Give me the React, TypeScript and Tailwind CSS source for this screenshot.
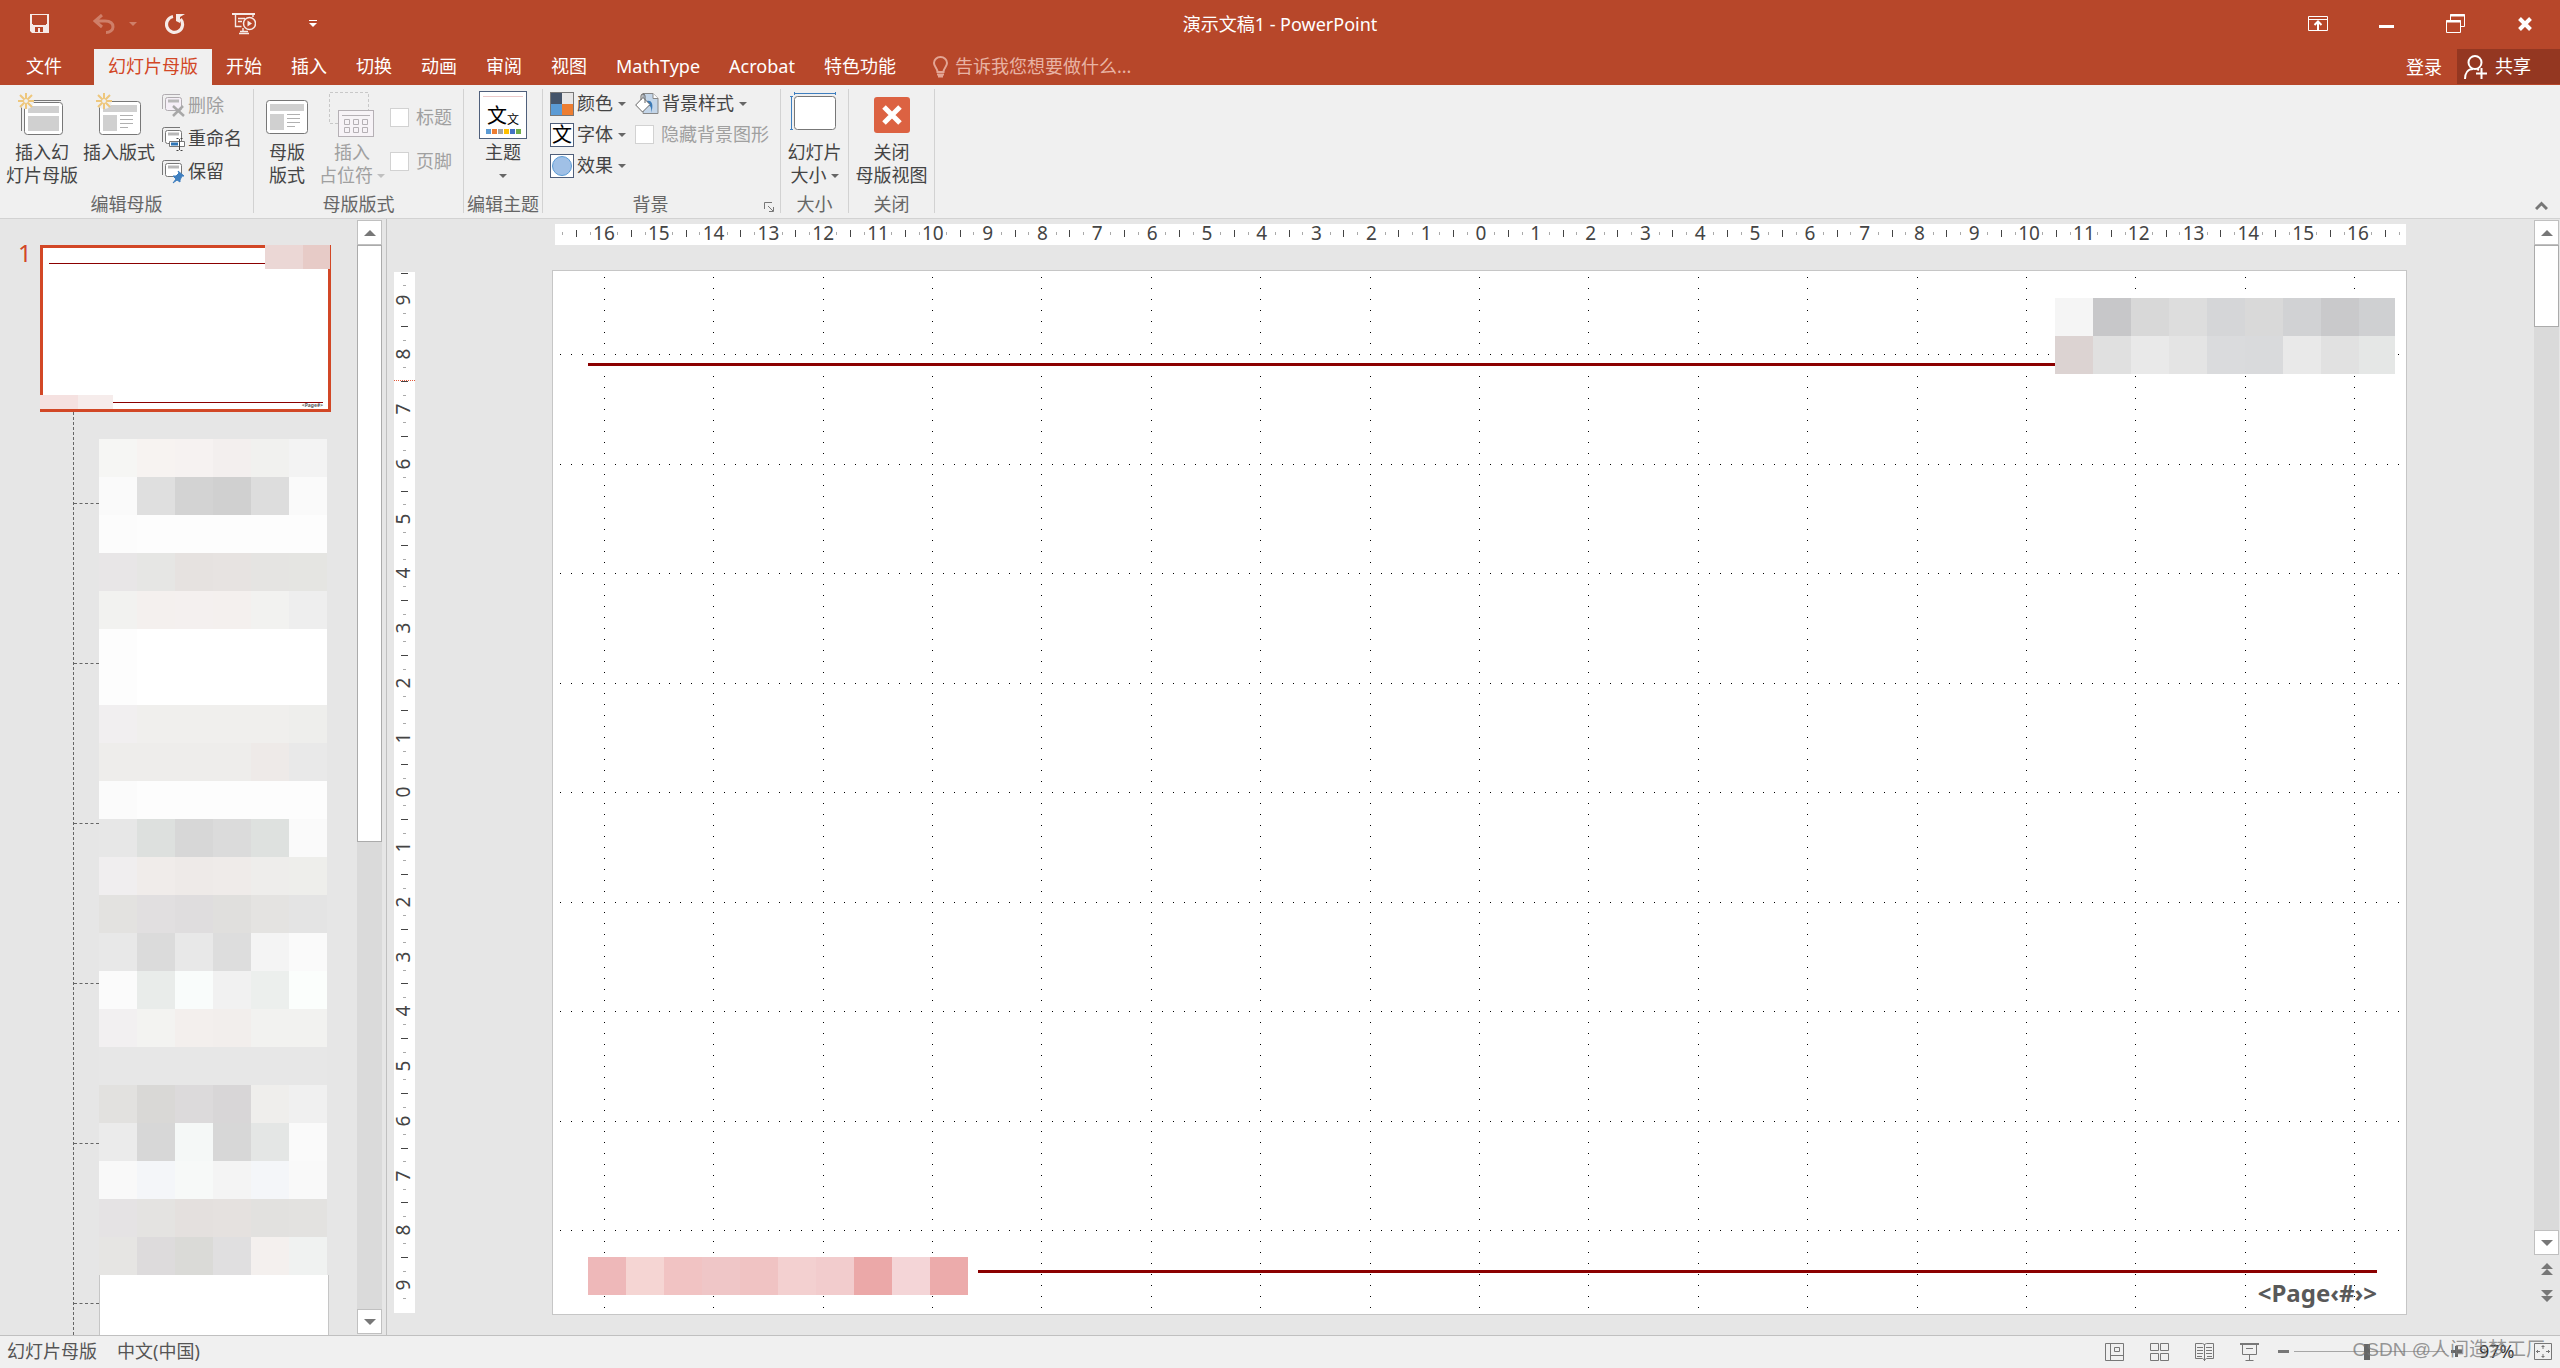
import type { ReactNode } from "react";
import clsx from "clsx";

const TABS = ["开始", "插入", "切换", "动画", "审阅", "视图", "MathType", "Acrobat", "特色功能"];

/* Pixelated previews of the layouts in the left pane, six cells per row */
const LAYOUT_CELLS = [
  "bg-[#f6f6f4]", "bg-[#f7f3f1]", "bg-[#f6f2f1]", "bg-[#f3efee]", "bg-[#f1f1ef]", "bg-[#f3f3f3]",
  "bg-[#fafafa]", "bg-[#dfdfdf]", "bg-[#d3d3d3]", "bg-[#d0d0d0]", "bg-[#dddddd]", "bg-[#fafafa]",
  "bg-[#fcfcfc]", "bg-[#fdfdfd]", "bg-[#fdfdfd]", "bg-[#fdfdfd]", "bg-[#fdfdfd]", "bg-[#fdfdfd]",
  "bg-[#e8e6e7]", "bg-[#e6e6e4]", "bg-[#e6e2e0]", "bg-[#e7e3e1]", "bg-[#e5e4e2]", "bg-[#e5e5e2]",
  "bg-[#f2f2f0]", "bg-[#f4f0ee]", "bg-[#f4f0ef]", "bg-[#f4f0ee]", "bg-[#f2f2f0]", "bg-[#eeeeee]",
  "bg-[#fdfdfd]", "bg-white", "bg-white", "bg-white", "bg-white", "bg-white",
  "bg-[#fdfdfd]", "bg-white", "bg-white", "bg-white", "bg-white", "bg-white",
  "bg-[#f1eff0]", "bg-[#f0efed]", "bg-[#f0efed]", "bg-[#f0efed]", "bg-[#f0efed]", "bg-[#eeeeec]",
  "bg-[#eeedeb]", "bg-[#eeedeb]", "bg-[#eeedeb]", "bg-[#eeedeb]", "bg-[#eeeae8]", "bg-[#e9e9e9]",
  "bg-[#fbfbfb]", "bg-[#fdfdfd]", "bg-[#fdfdfd]", "bg-[#fdfdfd]", "bg-[#fdfdfd]", "bg-[#fdfdfd]",
  "bg-[#e7e7e7]", "bg-[#dde0de]", "bg-[#d7d7d7]", "bg-[#dbdbdb]", "bg-[#dee1df]", "bg-[#fafafa]",
  "bg-[#f0eeef]", "bg-[#f0ecea]", "bg-[#eeeae8]", "bg-[#efebe9]", "bg-[#eeedeb]", "bg-[#eeeeeb]",
  "bg-[#e3e2e0]", "bg-[#e1dfe0]", "bg-[#dfddde]", "bg-[#e0dfdd]", "bg-[#e4e3e1]", "bg-[#e4e4e4]",
  "bg-[#e8e8e8]", "bg-[#dbdbdb]", "bg-[#e8e8e8]", "bg-[#dddddd]", "bg-[#f4f4f4]", "bg-[#fafafa]",
  "bg-[#fbfbfb]", "bg-[#e9ecea]", "bg-[#f9fcfb]", "bg-[#f1f1f1]", "bg-[#ecefed]", "bg-[#fbfefc]",
  "bg-[#f2f0f1]", "bg-[#f3f3f1]", "bg-[#f3efed]", "bg-[#f2eeec]", "bg-[#f2f2f0]", "bg-[#f2f2f0]",
  "bg-[#e7e7e7]", "bg-[#e7e7e7]", "bg-[#e7e7e7]", "bg-[#e7e7e7]", "bg-[#e7e7e7]", "bg-[#e7e7e7]",
  "bg-[#e2e1df]", "bg-[#d9d8d6]", "bg-[#dcdadb]", "bg-[#d8d6d7]", "bg-[#efeeec]", "bg-[#f0f0f0]",
  "bg-[#ebebeb]", "bg-[#d7d7d7]", "bg-[#f5f8f7]", "bg-[#d7d7d7]", "bg-[#e4e6e5]", "bg-[#fafafa]",
  "bg-[#f9f9f9]", "bg-[#f4f6f9]", "bg-[#f7f9f8]", "bg-[#f4f4f4]", "bg-[#f4f6f9]", "bg-[#f9f9f9]",
  "bg-[#e5e3e4]", "bg-[#e4e3e1]", "bg-[#e4e0de]", "bg-[#e5e1df]", "bg-[#e2e1df]", "bg-[#e3e2e0]",
  "bg-[#e6e5e3]", "bg-[#dddbdc]", "bg-[#dadad7]", "bg-[#e0dfe0]", "bg-[#f4f0ee]", "bg-[#f0f2f1]",
];

const LOGO_CELLS = [
  "bg-[#f5f5f5]", "bg-[#c7c7c9]", "bg-[#d8d8d8]", "bg-[#dddddd]", "bg-[#d5d6d8]", "bg-[#d9d9d9]", "bg-[#d1d2d4]", "bg-[#c9c9cb]", "bg-[#cfd0d2]",
  "bg-[#dcd3d2]", "bg-[#e0e0e0]", "bg-[#e9e9e9]", "bg-[#e4e4e4]", "bg-[#dadbdd]", "bg-[#d9dadc]", "bg-[#e9e9e9]", "bg-[#e1e1e1]", "bg-[#e5e7e6]",
];

const FOOTER_CELLS = [
  "bg-[#eeb8b9]", "bg-[#f5d5d3]", "bg-[#f1c3c3]", "bg-[#efc6c7]", "bg-[#f0c3c3]",
  "bg-[#f3d0d0]", "bg-[#f2cccd]", "bg-[#eba8a8]", "bg-[#f4d5d7]", "bg-[#ecabab]",
];

function range(from: number, to: number) {
  return Array.from({ length: to - from + 1 }, (_, i) => from + i);
}

function Caret({ className = "text-[#666]" }: { className?: string }) {
  return (
    <svg width="8" height="4" viewBox="0 0 8 4" className={clsx("shrink-0", className)}>
      <path d="M0 0h8L4 4z" fill="currentColor" />
    </svg>
  );
}

/* ---------- title bar ---------- */

function TitleBar() {
  return (
    <div className="grid grid-cols-[1fr_auto_1fr] items-center h-[49px] text-white">
      <div className="flex items-center pl-[30px] pb-[2px]">
        <button aria-label="保存">
          <svg width="19" height="19" viewBox="0 0 19 19" className="block">
            <path fillRule="evenodd" fill="#f6ebe8" d="M0 0h19v19h-2H2L0 17zM2 1v9h1v1h13v-1h1V1zM5 13v5h3v-4h2v4h3v-5z" />
          </svg>
        </button>
        <button aria-label="撤消" className="ml-11">
          <svg width="22" height="20" viewBox="0 0 22 20" className="block" fill="none" stroke="#cf7f69" strokeWidth="3">
            <path d="M9 1L2 7l7 6M3 7h9c5 0 8 2 8 6 0 3-3 5.500-7 5.500" />
          </svg>
        </button>
        <button aria-label="撤消选项" className="ml-[14px]">
          <Caret className="text-[#cf7f69]" />
        </button>
        <button aria-label="重复" className="ml-7">
          <svg width="20" height="20" viewBox="0 0 20 20" className="block">
            <path d="M8 2.500A8 8 0 1 0 15.500 5" fill="none" stroke="#f6ebe8" strokeWidth="3.200" />
            <path d="M11 0h9l-5 3 0 6-4-2z" fill="#f6ebe8" />
          </svg>
        </button>
        <button aria-label="从头开始放映" className="ml-[47px]">
          <svg width="24" height="22" viewBox="0 0 24 22" className="block" fill="none" stroke="#f6ebe8">
            <path d="M0 1h23" strokeWidth="2" />
            <path d="M3.500 2v11.500h6M6 5.500h7M6 8.500h4M21 2v2M11 15v3M7 20.500h10M8 18.500h8" strokeWidth="1.400" />
            <circle cx="17.500" cy="10.500" r="6" strokeWidth="1.500" />
            <path d="M15.500 7.500v6l4.500-3z" fill="#f6ebe8" stroke="none" />
          </svg>
        </button>
        <button aria-label="自定义快速访问工具栏" className="ml-[53px]">
          <svg width="8" height="8" viewBox="0 0 8 8" className="block" fill="#fff">
            <path d="M0 0h8v1H0zM0 3h8L4 7z" />
          </svg>
        </button>
      </div>
      <h1 className="pb-[2px] text-[18px] leading-6">演示文稿1 - PowerPoint</h1>
      <div className="flex items-center justify-end pr-7 pb-[2px]">
        <button aria-label="功能区显示选项">
          <svg width="20" height="15" viewBox="0 0 20 15" className="block" fill="none" stroke="#fff">
            <path d="M.5.5h19v14H.5zM1 3.500h18" />
            <path d="M10 14V6M6.500 9L10 5.500 13.500 9" strokeWidth="2" />
          </svg>
        </button>
        <button aria-label="最小化" className="ml-[51px]">
          <svg width="15" height="19" viewBox="0 0 15 19" className="block">
            <path d="M0 11h15v3H0z" fill="#fff" />
          </svg>
        </button>
        <button aria-label="向下还原" className="ml-[52px]">
          <svg width="19" height="19" viewBox="0 0 19 19" className="block" fill="none" stroke="#fff">
            <path d="M4.500 6V.5h14v12H15M.5 6.500h14v12H.5z" />
            <path d="M4 1.500h15M0 7.500h15" strokeWidth="2" />
          </svg>
        </button>
        <button aria-label="关闭" className="ml-[53px]">
          <svg width="14" height="14" viewBox="0 0 14 14" className="block">
            <path d="M1.500 1.500l11 11M12.500 1.500l-11 11" stroke="#fff" strokeWidth="4" />
          </svg>
        </button>
      </div>
    </div>
  );
}

function TabBar() {
  return (
    <div className="flex items-stretch h-9 text-[18px] text-white">
      <button className="px-[26px] pb-[2px]">文件</button>
      <button className="ml-[6px] px-[14px] pb-[2px] bg-[#f0f0f0] text-[#d24726]">幻灯片母版</button>
      <nav className="flex ml-[14px] pb-[2px] gap-[29px]">
        {TABS.map((tab) => (
          <button key={tab}>{tab}</button>
        ))}
      </nav>
      <label className="flex flex-1 items-center ml-[37px] pb-px">
        <svg width="15" height="22" viewBox="0 0 15 22" fill="none" stroke="#e3a594" strokeWidth="2">
          <path d="M4.500 16c0-4-3.500-5-3.500-9a6.500 6 0 0 1 13 0c0 4-3.500 5-3.500 9z" />
          <path d="M4 18.500h7M5 20.500h5" />
        </svg>
        <input
          aria-label="告诉我您想要做什么"
          placeholder="告诉我您想要做什么..."
          className="w-60 ml-[7px] bg-transparent outline-none placeholder:text-[#e8b3a4]"
        />
      </label>
      <button className="px-[15px]">登录</button>
      <button className="flex items-center w-[103px] mb-px pl-[7px] gap-2 bg-[#943721]">
        <svg width="23" height="24" viewBox="0 0 23 24" fill="none" stroke="#fff" strokeWidth="2">
          <circle cx="11" cy="7.500" r="6.500" />
          <path d="M1 24c0-6 3-10 8-10M13 14l2 1M12 18.500h11M17.500 13v11" />
        </svg>
        共享
      </button>
    </div>
  );
}

/* ---------- ribbon ---------- */

function Group({ label, className, launcher, children }: { label: string; className: string; launcher?: boolean; children: ReactNode }) {
  return (
    <section className={clsx("flex flex-col shrink-0 mt-1 mb-[5px] border-r border-[#d2d2d2]", className)}>
      <div className="flex h-[103px]">{children}</div>
      <div className={clsx("relative h-[21px] text-center leading-6 text-[#666] whitespace-nowrap", launcher && "pr-[22px]")}>
        {label}
        {launcher && (
          <button aria-label="背景格式" className="absolute right-[6px] top-[10px]">
            <svg width="10" height="10" viewBox="0 0 10 10" className="block" fill="none" stroke="#777">
              <path d="M.5 7V.5H8M4 4l5 5M9.500 5v4.500H5" />
            </svg>
          </button>
        )}
      </div>
    </section>
  );
}

function BigButton({ icon, className, children }: { icon: ReactNode; className: string; children: ReactNode }) {
  return (
    <button className={clsx("flex flex-col items-center shrink-0 pt-[2px] leading-[23px] whitespace-nowrap", className)}>
      <span className="flex items-center justify-center h-12 mb-[2px]">{icon}</span>
      {children}
    </button>
  );
}

function SmallButton({ icon, caret, className, children }: { icon: ReactNode; caret?: boolean; className?: string; children: ReactNode }) {
  return (
    <button className={clsx("flex items-center whitespace-nowrap", className)}>
      {icon}
      <span className="ml-[3px]">{children}</span>
      {caret && <Caret className="ml-[5px] text-[#666]" />}
    </button>
  );
}

function CheckItem({ label }: { label: string }) {
  return (
    <label className="flex items-center gap-[7px] text-[#a0a0a0] whitespace-nowrap">
      <input type="checkbox" className="appearance-none size-[19px] bg-white border border-[#d2d2d2]" />
      {label}
    </label>
  );
}

function Spark() {
  return (
    <g>
      <circle cx="8" cy="8" r="8" fill="#f0f0f0" />
      <path d="M8 0v16M0 8h16M2 2l12 12M14 2L2 14" stroke="#eec77c" strokeWidth="2" />
      <circle cx="8" cy="8" r="2.500" fill="#f0f0f0" stroke="#eec77c" />
    </g>
  );
}

function InsertMasterIcon() {
  return (
    <svg width="46" height="44" viewBox="0 0 46 44" className="mr-0.5">
      <path d="M3.500 38V9M13 7.500h30" fill="none" stroke="#777" />
      <rect x="6.500" y="9.500" width="38" height="32" rx="3" fill="#fff" stroke="#777" />
      <path d="M10 13h31v7H10zM10 23h31v15H10z" fill="#d0d0d0" />
      <Spark />
    </svg>
  );
}

function LayoutShape() {
  return (
    <g>
      <rect x=".5" y=".5" width="41" height="33" rx="3" fill="#fff" stroke="#777" />
      <path d="M4 4h34v7H4zM4 14h14v16H4z" fill="#d0d0d0" />
      <path d="M21 14.500h13M21 18.500h13M21 22.500h13M21 26.500h8" stroke="#b0b0b0" />
    </g>
  );
}

function InsertLayoutIcon() {
  return (
    <svg width="46" height="44" viewBox="0 0 46 44">
      <g transform="translate(3 8)">
        <LayoutShape />
      </g>
      <Spark />
    </svg>
  );
}

function PlaceholderIcon() {
  return (
    <svg width="46" height="46" viewBox="0 0 46 46" fill="none">
      <path d="M9 31.500H.5V.5h39V18" stroke="#c8c8c8" strokeDasharray="3 2" />
      <rect x="9.500" y="18.500" width="35" height="26" fill="#f7f3f7" stroke="#b5b0b5" />
      <path d="M13 23.500h28" stroke="#b5b0b5" />
      <path d="M15.500 27.500h5v5h-5zM24.500 27.500h5v5h-5zM33.500 27.500h5v5h-5zM15.500 35.500h5v5h-5zM24.500 35.500h5v5h-5zM33.500 35.500h5v5h-5z" stroke="#b5b0b5" />
    </svg>
  );
}

function MasterMini({ muted, children }: { muted?: boolean; children: ReactNode }) {
  return (
    <svg width="23" height="24" viewBox="0 0 23 24" fill="none" stroke={muted ? "#b0acb0" : "#777"}>
      <path d="M.5 15V2.500a2 2 0 0 1 2-2H18" />
      <rect x="3.500" y="3.500" width="16" height="13" rx="2" fill={muted ? "#f5eff7" : "#fff"} />
      <path d="M6 7h11" stroke="#b8b8b8" strokeWidth="3" />
      {children}
    </svg>
  );
}

function ThemeIcon() {
  return (
    <span className="relative flex flex-col items-center w-12 h-12 bg-white border border-[#4f5f7b] font-['Noto_Sans_CJK_SC',sans-serif] text-black">
      <span className="w-10 mt-1 border-t border-[#ecc9c9]" />
      <span className="flex items-end h-7 mt-1 text-[20px] leading-7">
        文<span className="text-[12px] leading-5">文</span>
      </span>
      <span className="flex gap-px">
        <i className="size-[5px] bg-[#5b9bd5]" />
        <i className="size-[5px] bg-[#ed7d31]" />
        <i className="size-[5px] bg-[#a5a5a5]" />
        <i className="size-[5px] bg-[#ffc000]" />
        <i className="size-[5px] bg-[#4472c4]" />
        <i className="size-[5px] bg-[#70ad47]" />
      </span>
    </span>
  );
}

function BackgroundIcon() {
  return (
    <svg width="24" height="23" viewBox="0 0 24 23" fill="none" stroke="#666">
      <path d="M8 1.500h10l5 5v15H8z" fill="#c3d5e8" stroke="#888" />
      <path d="M18 1.500v5h5" fill="#fff" stroke="#888" />
      <path d="M12 9c5-1 7 4 4 12 1-6-1-8-4-8z" fill="#3a7ab8" stroke="none" />
      <path d="M.7 13L8 5.500l7 7-7.500 7.500z" fill="#fff" />
      <path d="M6 8V4a2 2 0 0 1 4 0v7" />
    </svg>
  );
}

function Ribbon() {
  return (
    <div className="flex h-[134px] bg-[#f0f0f0] border-b border-[#d2d2d2] text-[18px] text-[#444]">
      <Group label="编辑母版" className="w-[254px]">
        <BigButton icon={<InsertMasterIcon />} className="w-[80px] ml-[2px]">
          <span>插入幻</span>
          <span>灯片母版</span>
        </BigButton>
        <BigButton icon={<InsertLayoutIcon />} className="w-[74px]">
          <span>插入版式</span>
        </BigButton>
        <div className="flex flex-col ml-[6px] leading-[33px]">
          <SmallButton
            className="text-[#a0a0a0]"
            icon={
              <MasterMini muted>
                <path d="M11 12l11 10M21 12L11 22" stroke="#a8a8a8" strokeWidth="2.500" />
              </MasterMini>
            }
          >
            删除
          </SmallButton>
          <SmallButton
            icon={
              <MasterMini>
                <path d="M7.500 14.500h15v5h-15z" fill="#fff" />
                <path d="M9 17h7" stroke="#2e75b6" strokeWidth="3" />
                <path d="M17.500 12v11M14.500 11.500h2M18.500 11.500h2M14.500 23.500h2M18.500 23.500h2" stroke="#444" />
              </MasterMini>
            }
          >
            重命名
          </SmallButton>
          <SmallButton
            icon={
              <MasterMini>
                <path d="M16 11l6 5-2 0-2 4 0 2-3-2-4 3 3-4-3-3h3l3-3z" fill="#3f7fbf" stroke="#3f7fbf" />
              </MasterMini>
            }
          >
            保留
          </SmallButton>
        </div>
      </Group>

      <Group label="母版版式" className="w-[210px]">
        <BigButton
          className="w-[50px] ml-2"
          icon={
            <svg width="42" height="34" viewBox="0 0 42 34" className="mt-1">
              <LayoutShape />
            </svg>
          }
        >
          <span>母版</span>
          <span>版式</span>
        </BigButton>
        <BigButton icon={<PlaceholderIcon />} className="w-[72px] ml-1 text-[#a0a0a0]">
          <span>插入</span>
          <span className="flex items-center gap-1">
            占位符
            <Caret className="text-[#c0c0c0]" />
          </span>
        </BigButton>
        <div className="flex flex-col pt-[6px] ml-[2px] leading-[44px]">
          <CheckItem label="标题" />
          <CheckItem label="页脚" />
        </div>
      </Group>

      <Group label="编辑主题" className="w-[79px]">
        <BigButton icon={<ThemeIcon />} className="w-full">
          <span>主题</span>
          <span className="flex items-center h-[23px]">
            <Caret />
          </span>
        </BigButton>
      </Group>

      <Group label="背景" className="w-[238px]" launcher>
        <div className="flex flex-col -mt-px ml-[7px] leading-[31px]">
          <SmallButton
            caret
            icon={
              <span className="grid grid-cols-2 size-6 border border-[#777]">
                <i className="bg-[#44546a]" />
                <i className="bg-[#e7e6e6]" />
                <i className="bg-[#5b9bd5]" />
                <i className="bg-[#ed7d31]" />
              </span>
            }
          >
            颜色
          </SmallButton>
          <SmallButton
            caret
            icon={
              <span className="flex items-center justify-center size-6 bg-white border border-[#4f5f7b] text-[20px] leading-5 text-black">
                文
              </span>
            }
          >
            字体
          </SmallButton>
          <SmallButton
            caret
            icon={
              <span className="flex items-center justify-center size-6 bg-white border border-[#4f5f7b]">
                <i className="size-5 rounded-full border border-[#5b9bd5] bg-[#a0c0e6]" />
              </span>
            }
          >
            效果
          </SmallButton>
        </div>
        <div className="flex flex-col -mt-px ml-[9px] leading-[31px]">
          <SmallButton caret icon={<BackgroundIcon />}>
            背景样式
          </SmallButton>
          <CheckItem label="隐藏背景图形" />
        </div>
      </Group>

      <Group label="大小" className="w-[68px]">
        <BigButton
          className="w-full"
          icon={
            <svg width="46" height="39" viewBox="0 0 46 39" fill="none" className="mb-2 mr-1">
              <rect x="4.500" y="4.500" width="41" height="33" rx="3" fill="#fff" stroke="#777" />
              <path d="M4 1.500h41M4.500 0v3M45.500 0v3M1.500 4v33M0 4.500h3M0 37.500h3" stroke="#3f7fbf" />
            </svg>
          }
        >
          <span>幻灯片</span>
          <span className="flex items-center gap-1">
            大小
            <Caret />
          </span>
        </BigButton>
      </Group>

      <Group label="关闭" className="w-[86px]">
        <BigButton
          className="w-full"
          icon={
            <svg width="36" height="36" viewBox="0 0 36 36">
              <rect width="36" height="36" rx="3" fill="#dc6242" />
              <path d="M10 10l16 16M26 10L10 26" stroke="#fff" strokeWidth="5" />
            </svg>
          }
        >
          <span>关闭</span>
          <span>母版视图</span>
        </BigButton>
      </Group>

      <button aria-label="折叠功能区" className="self-end ml-auto mr-3 mb-2">
        <svg width="13" height="9" viewBox="0 0 13 9" className="block">
          <path d="M1 8l5.500-5.500L12 8" fill="none" stroke="#777" strokeWidth="3" />
        </svg>
      </button>
    </div>
  );
}

/* ---------- work area ---------- */

function ScrollButton({ down }: { down?: boolean }) {
  return (
    <button
      aria-label={down ? "向下滚动" : "向上滚动"}
      className="flex items-center justify-center w-[25px] h-[25px] shrink-0 bg-white border border-[#c0c0c0]"
    >
      <svg width="12" height="6" viewBox="0 0 12 6">
        <path d={down ? "M0 0h12L6 6z" : "M0 6h12L6 0z"} fill="#777" />
      </svg>
    </button>
  );
}

function LayoutPane() {
  return (
    <aside className="flex shrink-0 w-[387px] pt-px border-r border-[#c0c0c0] overflow-hidden">
      <div className="flex w-[357px] pt-[25px]">
        <span className="w-10 pl-[18px] text-[24px] leading-4 text-[#d24726]">1</span>
        <div className="flex flex-col">
          <div className="flex flex-col justify-between w-[291px] h-[167px] shrink-0 bg-white border-3 border-[#d24726]">
            <div className="flex -mt-[3px] -mr-[2px]">
              <span className="flex-1 mt-[18px] ml-[6px] h-px bg-[#8b0000]" />
              <span className="w-[38px] h-6 bg-[#ebd7d5]" />
              <span className="w-[27px] h-6 bg-[#e7cbc7]" />
            </div>
            <div className="flex -ml-[3px]">
              <span className="w-[38px] h-[14px] bg-[#f5e1e0]" />
              <span className="w-[35px] h-[14px] bg-[#f6eceb]" />
              <span className="flex-1 mr-[5px] mt-[7px] text-right text-[5px] leading-[4px] font-bold text-[#595959] border-t border-[#8b0000]">
                &lt;Page#&gt;
              </span>
            </div>
          </div>
          <div className="flex flex-1 min-h-0 pl-[33px] overflow-hidden">
            <div className="flex flex-col w-[26px] border-l border-dashed border-[#666]">
              <span className="h-[92px] shrink-0 border-b border-dashed border-[#666]" />
              {range(1, 5).map((n) => (
                <span key={n} className="h-40 shrink-0 border-b border-dashed border-[#666]" />
              ))}
            </div>
            <div className="w-[230px] pt-[27px]">
              <div className="grid grid-cols-[repeat(6,38px)] auto-rows-[38px]">
                {LAYOUT_CELLS.map((color, i) => (
                  <i key={i} className={color} />
                ))}
              </div>
              <div className="h-[130px] bg-white border-x border-[#c6c6c6]" />
            </div>
          </div>
        </div>
      </div>
      <div className="flex flex-col mb-px bg-[#dadada]">
        <ScrollButton />
        <div className="h-[597px] bg-white border border-[#ababab]" />
        <div className="flex-1" />
        <ScrollButton down />
      </div>
    </aside>
  );
}

/* Rulers are split in quarters of a centimetre: a number, a tick for each half, a dot for the rest */
function RulerMark({ quarter, vertical }: { quarter: number; vertical?: boolean }) {
  if (quarter % 4 === 0) {
    return <span className={clsx("pb-[2px] text-[19px] leading-[18px] text-[#444]", vertical && "-rotate-90")}>{Math.abs(quarter / 4)}</span>;
  }
  if (quarter % 2 === 0) {
    return <i className={clsx("shrink-0 bg-[#444]", vertical ? "w-[7px] h-px" : "w-px h-[7px]")} />;
  }
  return <i className={clsx("shrink-0 bg-[#aaa]", vertical ? "w-[3px] h-px" : "w-px h-[3px]")} />;
}

function VerticalRuler() {
  return (
    <div className="flex flex-col w-[21px] ml-[7px] mt-[53px] mb-[22px] pb-[7px] bg-white">
      <i className="w-[7px] h-px mt-px mb-[5px] mx-auto bg-[#444]" />
      {range(-37, 37).map((q) => (
        <div key={q} className="relative flex flex-1 basis-0 min-h-0 items-center justify-center">
          <RulerMark quarter={q} vertical />
          {q === -30 && <span className="absolute inset-x-0 top-[5px] border-t border-dotted border-[#e2593a]" />}
        </div>
      ))}
    </div>
  );
}

function HorizontalRuler() {
  return (
    <div className="flex h-[21px] shrink-0 mt-[5px] ml-[3px] mr-px pl-px pr-px pb-[2px] bg-white">
      {range(-67, 67).map((q) => (
        <div key={q} className="flex flex-1 basis-0 min-w-0 items-center justify-center">
          <RulerMark quarter={q} />
        </div>
      ))}
    </div>
  );
}

/* Dotted guides every two centimetres, five dots to the centimetre */
function SlideGrid() {
  const dot = (x: number, y: number) => `M${Math.round(x)} ${Math.round(y)}h1v1h-1z`;
  const columns = range(-8, 8).flatMap((c) => range(-47, 47).map((d) => dot(926 + c * 109.4, 521 + d * 10.95)));
  const rows = range(-4, 4).flatMap((r) => range(-84, 84).map((d) => dot(926 + d * 10.94, 521 + r * 109.5)));
  return (
    <svg viewBox="0 0 1853 1043" preserveAspectRatio="none" className="absolute inset-0 w-full h-full" shapeRendering="crispEdges">
      <path d={[...columns, ...rows].join("")} fill="#000" />
    </svg>
  );
}

function Slide() {
  return (
    <div className="relative flex flex-1 flex-col justify-between mt-[25px] mb-5 bg-white border border-[#c6c6c6]">
      <SlideGrid />
      <div className="relative flex items-end pt-[27px] pl-[35px] pr-[11px]">
        <span className="flex-1 h-[3px] mb-2 bg-[#8b0000]" />
        <div className="grid grid-cols-[repeat(8,38px)_36px] auto-rows-[38px]">
          {LOGO_CELLS.map((color, i) => (
            <i key={i} className={color} />
          ))}
        </div>
      </div>
      <div className="relative flex h-[57px] pl-[35px] pr-[29px] gap-[10px]">
        <div className="flex">
          {FOOTER_CELLS.map((color, i) => (
            <i key={i} className={clsx("size-[38px]", color)} />
          ))}
        </div>
        <div className="flex-1 pt-[13px]">
          <div className="h-[3px] bg-[#8b0000]" />
          <p className="mt-1 text-right text-[24px] leading-8 font-bold text-[#595959]">&lt;Page‹#›&gt;</p>
        </div>
      </div>
    </div>
  );
}

function PageJump({ next }: { next?: boolean }) {
  return (
    <button aria-label={next ? "下一张幻灯片" : "上一张幻灯片"} className="flex justify-center h-[27px] items-center">
      <svg width="12" height="12" viewBox="0 0 12 12">
        <path d={next ? "M0 0h12L6 6zM0 6h12l-6 6z" : "M0 6h12L6 0zM0 12h12L6 6z"} fill="#777" />
      </svg>
    </button>
  );
}

function WorkArea() {
  return (
    <div className="flex flex-1 min-h-0">
      <LayoutPane />
      <VerticalRuler />
      <main className="flex flex-1 flex-col min-w-0 ml-[137px] mr-[127px]">
        <HorizontalRuler />
        <Slide />
      </main>
      <div className="flex flex-col pt-px pr-px pb-[26px]">
        <div className="flex flex-col flex-1 bg-[#dadada]">
          <ScrollButton />
          <div className="h-[82px] bg-white border border-[#ababab]" />
          <div className="flex-1" />
          <ScrollButton down />
        </div>
        <PageJump />
        <PageJump next />
      </div>
    </div>
  );
}

/* ---------- status bar ---------- */

function StatusBar() {
  return (
    <footer className="relative flex items-center h-[33px] shrink-0 pl-[7px] pr-2 pb-px bg-[#f0f0f0] border-t border-[#c0c0c0] text-[18px] text-[#555]">
      <span>幻灯片母版</span>
      <button className="ml-5">中文(中国)</button>
      <div className="flex items-center gap-[26px] ml-auto">
        <button aria-label="普通视图">
          <svg width="19" height="18" viewBox="0 0 19 18" className="block" fill="none" stroke="#777">
            <path d="M.5.5h18v17H.5zM5.500 1v17M6 12.500h13M9.500 4.500h5v4h-5z" />
          </svg>
        </button>
        <button aria-label="幻灯片浏览">
          <svg width="19" height="18" viewBox="0 0 19 18" className="block" fill="none" stroke="#777">
            <path d="M.5.5h8v7h-8zM10.500.5h8v7h-8zM.5 10.500h8v7h-8zM10.500 10.500h8v7h-8z" />
          </svg>
        </button>
        <button aria-label="阅读视图">
          <svg width="19" height="18" viewBox="0 0 19 18" className="block" fill="none" stroke="#777">
            <path d="M.5.5h7l2 1 2-1h7v15h-7l-2 1.500-2-1.500h-7zM9.500 1v17M2 4.500h6M2 7.500h6M2 10.500h6M2 13.500h5M11 4.500h6M11 7.500h6M11 10.500h6M12 13.500h5" />
          </svg>
        </button>
        <button aria-label="幻灯片放映">
          <svg width="19" height="18" viewBox="0 0 19 18" className="block" fill="none" stroke="#777">
            <path d="M0 1h19" strokeWidth="2" />
            <path d="M2.500 2v9.500h14V2M9.500 12v5M5.500 17.500h8M6 5.500h7" />
          </svg>
        </button>
      </div>
      <button aria-label="缩小" className="ml-[19px] w-[11px] h-[3px] bg-[#777]" />
      <input
        type="range"
        aria-label="显示比例"
        defaultValue={48}
        className="appearance-none w-[151px] h-px ml-[5px] bg-[#a6a6a6] [&::-webkit-slider-thumb]:appearance-none [&::-webkit-slider-thumb]:w-[6px] [&::-webkit-slider-thumb]:h-[16px] [&::-webkit-slider-thumb]:bg-[#666]"
      />
      <button aria-label="放大" className="ml-[6px]">
        <svg width="11" height="11" viewBox="0 0 11 11" className="block">
          <path d="M5.500 0v11M0 5.500h11" stroke="#666" strokeWidth="3" />
        </svg>
      </button>
      <button className="w-10 ml-[17px] text-left text-[#333]">97%</button>
      <button aria-label="使幻灯片适应当前窗口" className="ml-[15px]">
        <svg width="18" height="17" viewBox="0 0 18 17" className="block" fill="none" stroke="#777">
          <path d="M.5.5h17v16H.5zM9 2v4M9 11v4M2 8.500h4M12 8.500h4M7.500 3.500h3M7.500 13.500h3M3.500 7v3M14.500 7v3" />
        </svg>
      </button>
      <span className="absolute right-[15px] top-0 text-[19px] leading-[27px] text-[#777]/75 font-['Liberation_Sans','Noto_Sans_CJK_SC',sans-serif] pointer-events-none">
        CSDN @人间造梦工厂
      </span>
    </footer>
  );
}

export default function App() {
  return (
    <div className="flex flex-col h-screen bg-[#e6e6e6] font-['Noto_Sans','Noto_Sans_CJK_SC',sans-serif] overflow-hidden">
      <header className="shrink-0 bg-[#b7472a]">
        <TitleBar />
        <TabBar />
        <Ribbon />
      </header>
      <WorkArea />
      <StatusBar />
    </div>
  );
}
